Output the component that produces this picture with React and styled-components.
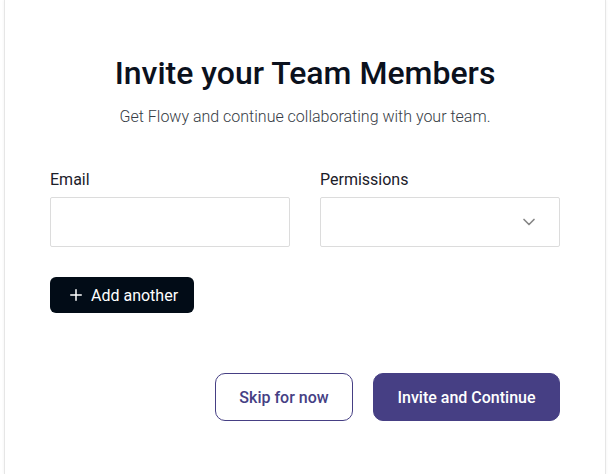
import React, { useState } from 'react';
import styled, { createGlobalStyle } from 'styled-components';
import { Plus, ChevronDown } from 'lucide-react';

const GlobalStyle = createGlobalStyle`
  * { box-sizing: border-box; }
  body {
    margin: 0;
    background: #ffffff;
    font-family: Roboto, "Liberation Sans", Arial, sans-serif;
  }
`;

const Page = styled.div`
  padding: 0 4px;
  height: 474px;
  overflow: hidden;
`;

const Card = styled.div`
  height: 100%;
  background: #fff;
  border-left: 1px solid #e6e6e6;
  border-right: 1px solid #e6e6e6;
  box-shadow: 0 0 3px rgba(0, 0, 0, 0.06);
  padding: 54px 45px 0 45px;
`;

const Title = styled.h1`
  margin: 0;
  text-align: center;
  font-size: 32px;
  font-weight: 500;
  color: #0b111d;
  line-height: 38px;
`;

const Subtitle = styled.p`
  margin: 15px 0 0;
  text-align: center;
  font-size: 16px;
  font-weight: 300;
  color: #363c45;
  line-height: 19px;
`;

const Fields = styled.div`
  display: grid;
  grid-template-columns: 1fr 1fr;
  column-gap: 30px;
  margin-top: 44px;
`;

const Field = styled.div`
  display: flex;
  flex-direction: column;
`;

const Label = styled.label`
  font-size: 16px;
  font-weight: 400;
  color: #1b2029;
  line-height: 19px;
  margin-bottom: 8px;
`;

const Input = styled.input`
  height: 50px;
  border: 1px solid #dcdcdc;
  border-radius: 2px;
  padding: 0 14px;
  font: inherit;
  outline: none;
`;

const SelectBox = styled.div`
  height: 50px;
  border: 1px solid #dcdcdc;
  border-radius: 2px;
  display: flex;
  align-items: center;
  justify-content: flex-end;
  padding-right: 20px;
  color: #858585;
`;

const AddButton = styled.button`
  margin-top: 30px;
  height: 36px;
  width: 144px;
  display: flex;
  align-items: center;
  gap: 6px;
  padding: 0 0 0 17px;
  border: none;
  border-radius: 6px;
  background: #020c17;
  color: #fff;
  font: inherit;
  font-size: 16px;
  font-weight: 400;
  cursor: pointer;
`;

const Actions = styled.div`
  display: flex;
  justify-content: flex-end;
  gap: 20px;
  margin-top: 60px;
`;

const ActionButton = styled.button`
  height: 48px;
  width: ${(p) => p.$width}px;
  border-radius: 10px;
  font: inherit;
  font-size: 16px;
  font-weight: 500;
  cursor: pointer;
  border: 1px solid #463f84;
  background: ${(p) => (p.$primary ? '#463f84' : '#fff')};
  color: ${(p) => (p.$primary ? '#fff' : '#463f84')};
`;

const App = () => {
  const [email, setEmail] = useState('');

  return (
    <>
      <GlobalStyle />
      <Page>
        <Card>
          <Title>Invite your Team Members</Title>
          <Subtitle>Get Flowy and continue collaborating with your team.</Subtitle>
          <Fields>
            <Field>
              <Label>Email</Label>
              <Input value={email} onChange={(e) => setEmail(e.target.value)} />
            </Field>
            <Field>
              <Label>Permissions</Label>
              <SelectBox>
                <ChevronDown size={20} strokeWidth={2} />
              </SelectBox>
            </Field>
          </Fields>
          <AddButton>
            <Plus size={18} strokeWidth={2} />
            Add another
          </AddButton>
          <Actions>
            <ActionButton $width={138}>Skip for now</ActionButton>
            <ActionButton $primary $width={187}>
              Invite and Continue
            </ActionButton>
          </Actions>
        </Card>
      </Page>
    </>
  );
};

export default App;
